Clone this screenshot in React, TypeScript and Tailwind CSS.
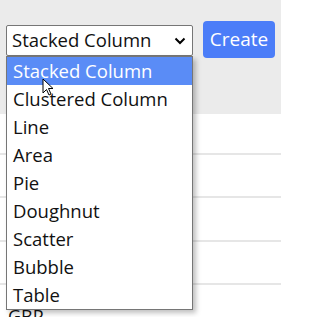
import React from 'react';

const chartTypes = [
  'Stacked Column',
  'Clustered Column',
  'Line',
  'Area',
  'Pie',
  'Doughnut',
  'Scatter',
  'Bubble',
  'Table',
];

export default function App() {
  return (
    <div className="relative w-[281px] h-[317px] overflow-hidden bg-white text-[#111] font-['Open_Sans',sans-serif]">
      {/* Toolbar */}
      <div className="h-[114px] bg-[#ebebeb] flex items-start pl-[6px] pt-[21px] gap-[10px]">
        <div className="mt-[4px] w-[187px] h-[31px] bg-white border border-[#767676] rounded-[2px] flex items-center justify-between pl-[5px] pr-[6px]">
          <span className="text-[18.5px] leading-none">Stacked Column</span>
          <svg width="12" height="8" viewBox="0 0 12 8" className="text-black">
            <path d="M1.5 1.5 L6 6 L10.5 1.5" fill="none" stroke="currentColor" strokeWidth="2" />
          </svg>
        </div>
        <button className="w-[72px] h-[37px] rounded-[4px] bg-[#4b7df8] text-white text-[19px] leading-none">
          Create
        </button>
      </div>

      {/* Table rows */}
      <div className="flex flex-col">
        <div className="h-[41px] border-b-2 border-[#e6e6e6]" />
        <div className="h-[43px] border-b-2 border-[#e6e6e6]" />
        <div className="h-[44px] border-b-2 border-[#e6e6e6]" />
        <div className="h-[43px] border-b-2 border-[#e6e6e6]" />
        <div className="h-[43px] pl-[8px] pt-[22px] text-[18px] leading-none">GBP</div>
      </div>

      {/* Open dropdown */}
      <div className="absolute left-[6px] top-[56px] w-[187px] bg-white border border-[#767676] shadow-[3px_3px_5px_rgba(0,0,0,0.25)]">
        {chartTypes.map((type, i) => (
          <div
            key={type}
            className={`h-[28px] flex items-center pl-[6px] text-[18.5px] leading-none ${
              i === 0 ? 'bg-[#5a8cf6] text-white' : 'text-[#111]'
            }`}
          >
            {type}
          </div>
        ))}
      </div>

      {/* Mouse cursor */}
      <svg className="absolute left-[42px] top-[78px]" width="12" height="18" viewBox="0 0 12 18">
        <path d="M1 1 L1 15 L4.5 11.5 L7 17 L9 16 L6.5 10.5 L11 10.5 Z" fill="white" stroke="black" strokeWidth="1" />
      </svg>
    </div>
  );
}
